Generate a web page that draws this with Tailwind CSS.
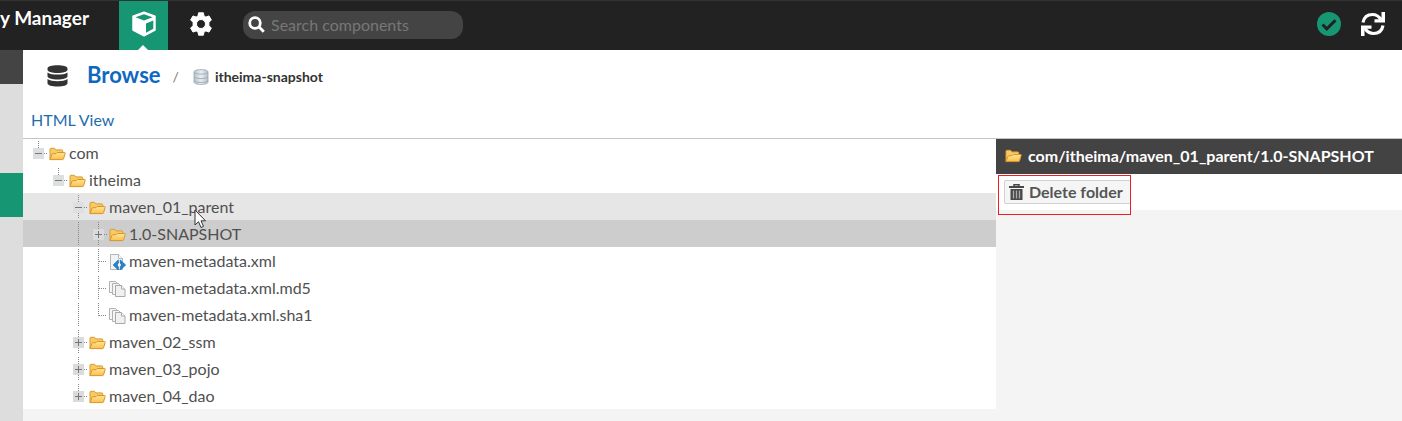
<!DOCTYPE html>
<html lang="en">
<head>
<meta charset="utf-8">
<title>Browse itheima-snapshot</title>
<script src="https://cdn.jsdelivr.net/npm/@tailwindcss/browser@4"></script>
</head>
<body class="min-h-screen flex flex-col bg-[#f4f4f4] font-['Lato',sans-serif] text-[#505050] text-base">
<svg class="absolute size-0" aria-hidden="true">
  <defs>
    <linearGradient id="gold" x1="0" y1="0" x2="0" y2="1"><stop offset="0" stop-color="#ffe596"/><stop offset="1" stop-color="#fbc04a"/></linearGradient>
    <linearGradient id="disk" x1="0" y1="0" x2="1" y2="0"><stop offset="0" stop-color="#b9c3cc"/><stop offset=".5" stop-color="#e9eef2"/><stop offset="1" stop-color="#b5bfc9"/></linearGradient>
    <symbol id="folder" viewBox="0 0 17 16">
      <path d="M1 13.500V3.200q0-.9.9-.9h3.600l1.400 1.600h6q.8 0 .8.900v2" fill="#f8cb62" stroke="#d99a35"/>
      <path d="M.9 13.600 3 8.300q.3-.6 1-.6h3l1.200-1.200h7.400q.8 0 .6.800l-1.700 5.600q-.2.7-1 .7z" fill="url(#gold)" stroke="#d9942c"/>
    </symbol>
    <symbol id="pages" viewBox="0 0 17 16">
      <path d="M.5.5h6l2 2v9h-8z" fill="#f5f5f5" stroke="#b2b2b2"/>
      <path d="M3.500 2.500h6l2 2v9h-8z" fill="#f5f5f5" stroke="#b2b2b2"/>
      <path d="M6.500 4.500h6l3.500 3.500v7.500H6.500z" fill="#f0f0f0" stroke="#a9a9a9"/>
      <path d="M12.500 4.500V8H16" fill="#fff" stroke="#a9a9a9"/>
    </symbol>
    <symbol id="xml" viewBox="0 0 17 16">
      <path d="M1.500.5h8L13.500 4.500v11h-12z" fill="#f1f3f4" stroke="#b3b8bc"/>
      <path d="M9.500.5v4h4" fill="#fff" stroke="#b3b8bc"/>
      <path d="M9.300 6v3L8 11l1.300 2v3L4.200 11zM11.300 6v3l1.300 2-1.300 2v3l5.300-5z" fill="#2285cf" stroke="#1b6fb4" stroke-width=".8"/>
    </symbol>
    <symbol id="line" viewBox="0 0 20 27"><path d="M9.500 2v23" stroke="#888" stroke-dasharray="1 1"/></symbol>
    <symbol id="tee" viewBox="0 0 20 27"><path d="M9.500 2v23M10 14.500h8" fill="none" stroke="#888" stroke-dasharray="1 1"/></symbol>
    <symbol id="end" viewBox="0 0 20 27"><path d="M9.500 2v13M10 14.500h8" fill="none" stroke="#888" stroke-dasharray="1 1"/></symbol>
    <symbol id="minus-end" viewBox="0 0 20 27"><path d="M9.500 2v8M15 14.500h4" stroke="#888" stroke-dasharray="1 1"/><path d="M4 9h11v11H4z" fill="#dcdee0"/><path d="M6 14.500h7" stroke="#777"/></symbol>
    <symbol id="minus" viewBox="0 0 20 27"><path d="M9.500 2v23M15 14.500h4" stroke="#888" stroke-dasharray="1 1"/><path d="M4 9h11v11H4z" fill="#dddfe1"/><path d="M6 14.500h7" stroke="#777"/></symbol>
    <symbol id="plus" viewBox="0 0 20 27"><path d="M9.500 2v23M15 14.500h4" stroke="#888" stroke-dasharray="1 1"/><path d="M4 9h11v11H4z" fill="#d9dbdd"/><path d="M6 14.500h7M9.500 11v7" stroke="#777"/></symbol>
    <symbol id="plus-end" viewBox="0 0 20 27"><path d="M9.500 2v12M15 14.500h4" stroke="#888" stroke-dasharray="1 1"/><path d="M4 9h11v11H4z" fill="#d9dbdd"/><path d="M6 14.500h7M9.500 11v7" stroke="#777"/></symbol>
  </defs>
</svg>

<header class="h-[50px] shrink-0 flex items-center bg-[#222] border-t border-[#333]">
  <div class="w-[119px] pb-4 text-[19px] leading-6 font-bold text-white whitespace-nowrap">y Manager</div>
  <button aria-label="Browse" class="relative self-stretch w-[49px] pb-1 flex items-center justify-center bg-[#169672]">
    <svg class="size-[26px]" viewBox="0 0 26 26"><path d="M13 1.200 24 5.200V19L13 24.800 2 19V5.200z" fill="#fff" stroke="#fff" stroke-width="1.500" stroke-linejoin="round"/><path d="M4.500 6.300 13 3.300l8.500 3L13 9.500z" fill="#169672"/><path d="M15 12.500 22.300 9.600v8.200L15 21.800z" fill="#169672"/></svg>
    <span class="absolute bottom-0 left-[19px] size-0 border-x-5 border-x-transparent border-b-5 border-b-white"></span>
  </button>
  <button aria-label="Administration" class="w-[65px] pb-1 flex justify-center">
    <svg class="size-6" viewBox="0 0 24 24" fill="#fff"><path stroke="#fff" stroke-linejoin="round" fill-rule="evenodd" d="M9.600.8h4.800l.6 3.200 1.900 1.100 3.100-1.200 2.400 4.200-2.500 2v3.800l2.500 2-2.400 4.200-3.100-1.200-1.900 1.100-.6 3.200H9.600L9 20l-1.900-1.100L4 20.100l-2.400-4.200 2.500-2v-3.800l-2.500-2L4 3.900l3.100 1.200L9 4zM12 7.500a4.500 4.500 0 1 0 0 9 4.500 4.500 0 0 0 0-9z"/></svg>
  </button>
  <label class="ml-[10px] mb-0.5 w-[220px] h-7 flex items-center gap-1.5 pl-[5px] pr-3 rounded-xl bg-[#444]">
    <svg class="size-[17px] shrink-0" viewBox="0 0 17 17" fill="none" stroke="#fff" stroke-width="2.800"><circle cx="7" cy="7" r="5.300"/><path d="m10.800 10.800 5 5"/></svg>
    <input type="search" aria-label="Search components" placeholder="Search components" class="min-w-0 flex-1 bg-transparent text-base leading-5 outline-none placeholder:text-[#777]">
  </label>
  <div class="ml-auto pr-[17px] pb-1 flex items-center gap-5">
    <button aria-label="System status"><svg class="block size-6" viewBox="0 0 24 24"><circle cx="12" cy="12" r="12" fill="#169672"/><path d="m5.500 12.500 4.300 4.300L18.500 8.200" fill="none" stroke="#222" stroke-width="3"/></svg></button>
    <button aria-label="Refresh"><svg class="block size-6" viewBox="0 0 24 24" fill="none" stroke="#fff" stroke-width="3.200"><path d="M2 10.500C3 5 7 2.500 11.500 2.500c4 0 6.500 2 8.500 5M22 13.500c-1 5.500-5 8-9.500 8-4 0-6.500-2-8.500-5"/><path d="M20.500 0H24v10.500H13.500V7.300h7zM3.500 24H0V13.500h10.500v3.200h-7z" fill="#fff" stroke="none"/></svg></button>
  </div>
</header>

<div class="flex-1 flex">
  <nav aria-label="Sections" class="w-[23px] shrink-0 bg-[#ddd]">
    <div class="h-[34px] bg-[#444]"></div>
    <div class="mt-[89px] h-11 bg-[#169672]"></div>
  </nav>
  <main class="flex-1 min-w-0">
    <div class="h-[88px] bg-white">
      <div class="flex items-center h-[52px] pl-6">
        <svg class="w-[21px] h-[22px]" viewBox="0 0 21 22" fill="#333"><path d="M.5 3.500C.5 1.500 5 .3 10.500.3s10 1.200 10 3.200v1.300c0 2-4.500 3.200-10 3.200S.5 6.800.5 4.800zM.5 7.500c2 1.600 6 2.100 10 2.100s8-.5 10-2.100v3.800c0 2-4.500 3.200-10 3.200s-10-1.200-10-3.200zM.5 14c2 1.600 6 2.200 10 2.200s8-.6 10-2.200v4.200c0 2-4.500 3.300-10 3.300s-10-1.300-10-3.300z"/></svg>
        <a href="#" class="ml-[19px] pb-0.5 text-[22px] leading-6 font-bold text-[#0f68c0]">Browse</a>
        <span class="ml-3 pt-0.5 text-sm text-[#777]">/</span>
        <svg class="ml-3.5 mt-0.5 size-4" viewBox="0 0 16 16"><path d="M1 3C1 1.500 4 .6 8 .6s7 .9 7 2.400v10c0 1.500-3 2.400-7 2.400S1 14.500 1 13z" fill="url(#disk)" stroke="#9ba6b0" stroke-width=".8"/><path d="M1 3.200c1 1.400 4 1.900 7 1.900s6-.5 7-1.900M1 7.700c1 1.400 4 1.900 7 1.900s6-.5 7-1.900M1 11.500c1 1.400 4 1.900 7 1.900s6-.5 7-1.900" fill="none" stroke="#97a3ae" stroke-width=".8"/></svg>
        <h1 class="ml-1.5 pt-0.5 text-sm font-bold text-[#333]">itheima-snapshot</h1>
      </div>
      <a href="#" class="block w-fit ml-2 mt-1.5 text-base leading-6 text-[#1f6dad]">HTML View</a>
    </div>
    <div class="flex items-start border-t border-[#c4c4c4]">
      <ul role="tree" aria-label="Components" class="flex-1 min-w-0 bg-white leading-[27px] *:flex *:items-center *:h-[27px] *:pl-1.5 *:whitespace-nowrap">
        <li role="treeitem"><svg class="w-5 h-[27px]"><use href="#minus-end"/></svg><svg class="w-[17px] h-4 mr-[3px] mt-0.5"><use href="#folder"/></svg>com</li>
        <li role="treeitem"><svg class="w-5 h-[27px] ml-5"><use href="#minus-end"/></svg><svg class="w-[17px] h-4 mr-[3px] mt-0.5"><use href="#folder"/></svg>itheima</li>
        <li role="treeitem" class="bg-[#e6e6e6]"><svg class="w-5 h-[27px] ml-10"><use href="#minus"/></svg><svg class="w-[17px] h-4 mr-[3px] mt-0.5"><use href="#folder"/></svg><span class="relative">maven_01_parent<svg class="absolute left-[85px] top-4 z-10 w-3 h-5" viewBox="0 0 12 20"><path d="M1 1v15l3.500-3.300L7 18.500l2.500-1.100L7 11.800h4.500z" fill="#fff" stroke="#333"/></svg></span></li>
        <li role="treeitem" aria-selected="true" class="bg-[#cdcdcd]"><svg class="w-5 h-[27px] ml-10"><use href="#line"/></svg><svg class="w-5 h-[27px]"><use href="#plus"/></svg><svg class="w-[17px] h-4 mr-[3px] mt-0.5"><use href="#folder"/></svg>1.0-SNAPSHOT</li>
        <li role="treeitem"><svg class="w-5 h-[27px] ml-10"><use href="#line"/></svg><svg class="w-5 h-[27px]"><use href="#tee"/></svg><svg class="w-[17px] h-4 mr-[3px] mt-0.5"><use href="#xml"/></svg>maven-metadata.xml</li>
        <li role="treeitem"><svg class="w-5 h-[27px] ml-10"><use href="#line"/></svg><svg class="w-5 h-[27px]"><use href="#tee"/></svg><svg class="w-[17px] h-4 mr-[3px] mt-0.5"><use href="#pages"/></svg>maven-metadata.xml.md5</li>
        <li role="treeitem"><svg class="w-5 h-[27px] ml-10"><use href="#line"/></svg><svg class="w-5 h-[27px]"><use href="#end"/></svg><svg class="w-[17px] h-4 mr-[3px] mt-0.5"><use href="#pages"/></svg>maven-metadata.xml.sha1</li>
        <li role="treeitem"><svg class="w-5 h-[27px] ml-10"><use href="#plus"/></svg><svg class="w-[17px] h-4 mr-[3px] mt-0.5"><use href="#folder"/></svg>maven_02_ssm</li>
        <li role="treeitem"><svg class="w-5 h-[27px] ml-10"><use href="#plus"/></svg><svg class="w-[17px] h-4 mr-[3px] mt-0.5"><use href="#folder"/></svg>maven_03_pojo</li>
        <li role="treeitem"><svg class="w-5 h-[27px] ml-10"><use href="#plus-end"/></svg><svg class="w-[17px] h-4 mr-[3px] mt-0.5"><use href="#folder"/></svg>maven_04_dao</li>
      </ul>
      <section class="w-[406px] shrink-0 bg-white">
        <h2 class="flex items-center h-[35px] pb-0.5 pl-[9px] bg-[#434343] text-base font-bold text-white whitespace-nowrap"><svg class="w-[17px] h-4 mr-1.5"><use href="#folder"/></svg>com/itheima/maven_01_parent/1.0-SNAPSHOT</h2>
        <div class="relative flex items-center h-9 pl-2">
          <button class="flex items-center w-[127px] h-6 pl-1 gap-[5px] rounded-xs border border-[#d0d0d0] bg-[#f5f5f5] text-base leading-5 font-bold text-[#555] whitespace-nowrap">
            <svg class="w-[15px] h-4 shrink-0" viewBox="0 0 15 16"><path d="M5 2V.8h5V2" fill="none" stroke="#444" stroke-width="1.500"/><path d="M0 2h15v2H0zM1.500 5h12v11h-12z" fill="#484848"/><path d="M4.500 6.500v8M7.500 6.500v8M10.500 6.500v8" stroke="#a9adb3" stroke-width="1.300"/></svg>Delete folder
          </button>
          <span class="absolute left-0.5 top-px w-[133px] h-10 border border-[#ee1c25]"></span>
        </div>
      </section>
    </div>
  </main>
</div>
</body>
</html>
